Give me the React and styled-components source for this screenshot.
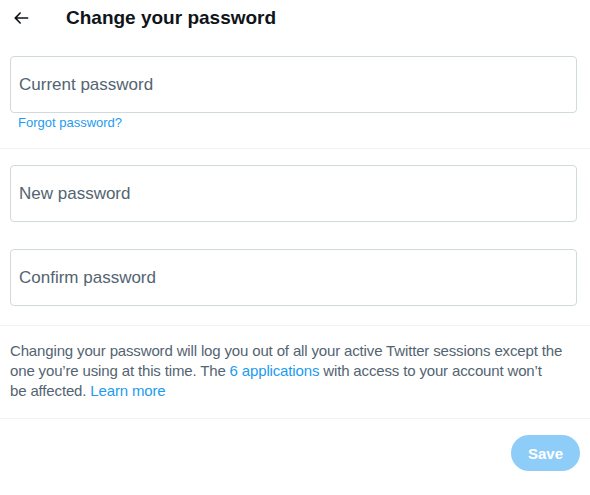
import React from 'react';
import styled, { createGlobalStyle } from 'styled-components';

const Global = createGlobalStyle`
  body {
    margin: 0;
    background: #fff;
    font-family: "Liberation Sans", Arial, Helvetica, sans-serif;
    color: #0f1419;
  }
`;

const Page = styled.div`
  width: 590px;
`;

const Header = styled.div`
  display: flex;
  align-items: center;
  height: 36px;
  padding-left: 11px;
`;

const BackButton = styled.button`
  display: flex;
  align-items: center;
  justify-content: center;
  width: 20px;
  height: 20px;
  padding: 0;
  border: 0;
  background: none;
  color: #0f1419;
  cursor: pointer;
`;

const Title = styled.h2`
  margin: 0 0 0 35px;
  font-size: 19px;
  font-weight: 700;
  line-height: 24px;
`;

const Section = styled.div`
  display: flex;
  flex-direction: column;
  gap: ${(p) => p.$gap || 0}px;
  padding: ${(p) => p.$pad};
  border-bottom: 1px solid #eff3f4;
`;

const Field = styled.label`
  display: flex;
  align-items: center;
  height: 57px;
  box-sizing: border-box;
  width: 567px;
  padding: 0 8px;
  border: 1px solid #cfd9de;
  border-radius: 4px;
  font-size: 17px;
  color: #536471;
`;

const Link = styled.a`
  color: #1d9bf0;
  text-decoration: none;
  cursor: pointer;
`;

const ForgotLink = styled(Link)`
  display: block;
  margin: 2px 0 0 8px;
  font-size: 13px;
  line-height: 16px;
`;

const Note = styled.p`
  margin: 0;
  font-size: 15px;
  line-height: 20px;
  letter-spacing: -0.15px;
  white-space: nowrap;
  color: #536471;
`;

const Footer = styled.div`
  display: flex;
  justify-content: flex-end;
  padding: 16px 10px;
`;

const SaveButton = styled.button`
  height: 36px;
  padding: 0 17px;
  border: 0;
  border-radius: 9999px;
  background: #8ecdf8;
  color: #fff;
  font-family: inherit;
  font-size: 15px;
  font-weight: 700;
`;

const BackArrow = () => (
  <svg viewBox="0 0 24 24" width="20" height="20" fill="currentColor">
    <path d="M20 11H7.414l4.293-4.293c.39-.39.39-1.023 0-1.414s-1.023-.39-1.414 0l-6 6c-.39.39-.39 1.023 0 1.414l6 6c.195.195.45.293.707.293s.512-.098.707-.293c.39-.39.39-1.023 0-1.414L7.414 13H20c.553 0 1-.447 1-1s-.447-1-1-1z" />
  </svg>
);

export default function App() {
  return (
    <Page>
      <Global />
      <Header>
        <BackButton aria-label="Back">
          <BackArrow />
        </BackButton>
        <Title>Change your password</Title>
      </Header>
      <Section $pad="20px 10px 17px">
        <Field>Current password</Field>
        <ForgotLink>Forgot password?</ForgotLink>
      </Section>
      <Section $pad="16px 10px 19px" $gap={27}>
        <Field>New password</Field>
        <Field>Confirm password</Field>
      </Section>
      <Section $pad="15px 10px 17px">
        <Note>
          Changing your password will log you out of all your active Twitter sessions except the
          <br />
          one you’re using at this time. The <Link>6 applications</Link> with access to your
          account won’t
          <br />
          be affected. <Link>Learn more</Link>
        </Note>
      </Section>
      <Footer>
        <SaveButton disabled>Save</SaveButton>
      </Footer>
    </Page>
  );
}
